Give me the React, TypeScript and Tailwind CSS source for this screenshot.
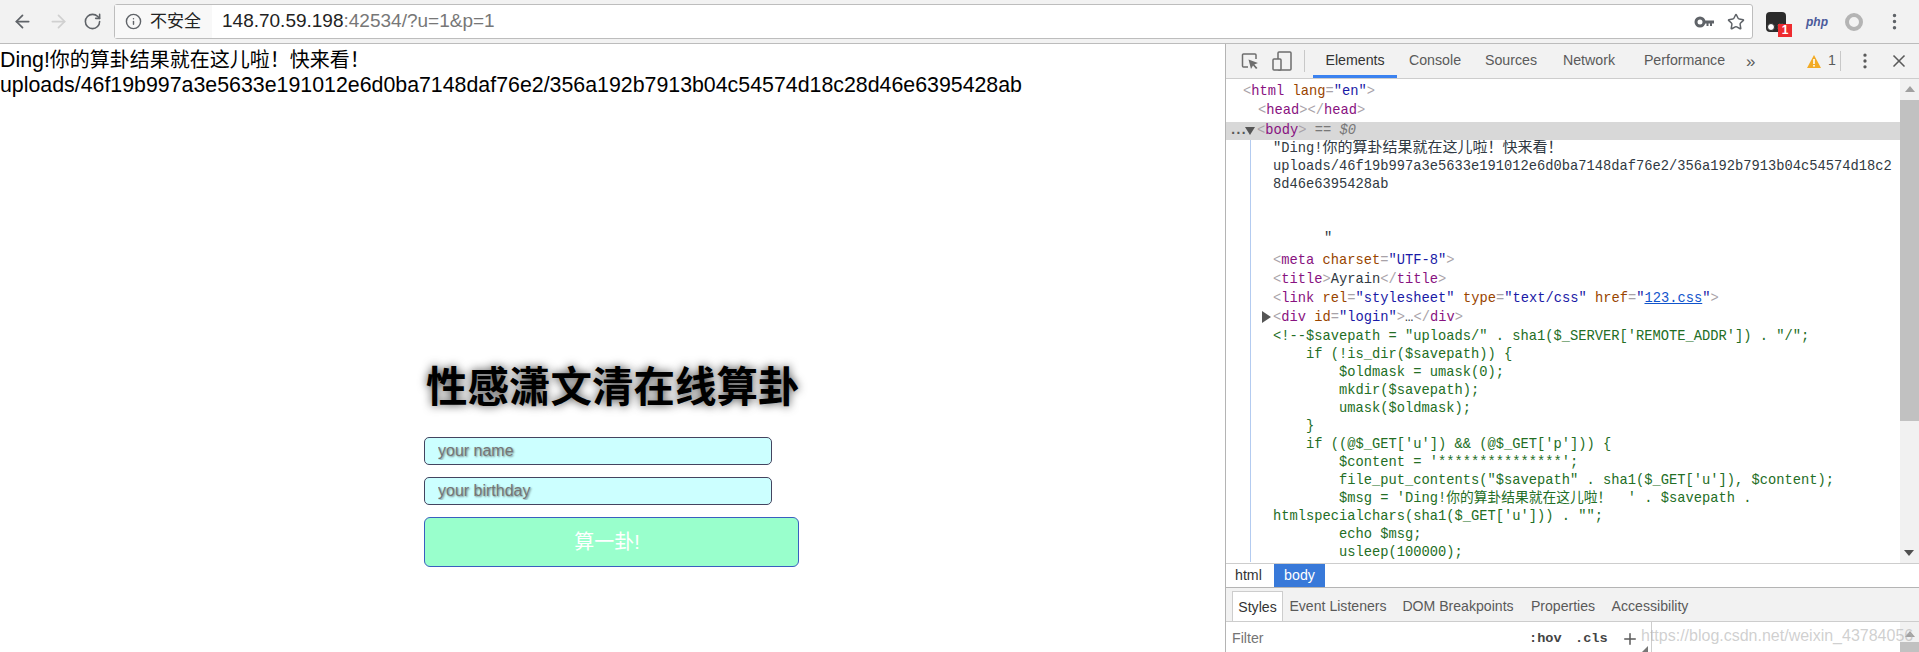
import { ArrowLeft, ArrowRight, Info, MoreVertical, Plus, RotateCw, Star, X } from "lucide-react";

const sans = "font-['Liberation_Sans','Noto_Sans_CJK_SC',sans-serif]";
const mono = "font-['Liberation_Mono','Noto_Sans_CJK_SC',monospace]";

const Tag = ({ children }: { children: React.ReactNode }) => <span className="text-[#881280]">{children}</span>;
const Br = ({ children }: { children: React.ReactNode }) => <span className="text-[#a8a2a8]">{children}</span>;
const Attr = ({ children }: { children: React.ReactNode }) => <span className="text-[#994500]">{children}</span>;
const Val = ({ children }: { children: React.ReactNode }) => <span className="text-[#1a1aa6]">{children}</span>;

const commentLines = [
  `<!--$savepath = "uploads/" . sha1($_SERVER['REMOTE_ADDR']) . "/";`,
  `    if (!is_dir($savepath)) {`,
  `        $oldmask = umask(0);`,
  `        mkdir($savepath);`,
  `        umask($oldmask);`,
  `    }`,
  `    if ((@$_GET['u']) && (@$_GET['p'])) {`,
  `        $content = '***************';`,
  `        file_put_contents("$savepath" . sha1($_GET['u']), $content);`,
  `        $msg = 'Ding!你的算卦结果就在这儿啦！  ' . $savepath .`,
  `htmlspecialchars(sha1($_GET['u'])) . "";`,
  `        echo $msg;`,
  `        usleep(100000);`,
];

function KeyIcon() {
  return (
    <svg width="20" height="12" viewBox="0 0 20 12" className="ml-auto">
      <circle cx="6" cy="6" r="4" fill="none" stroke="#5f6368" strokeWidth="3" />
      <path d="M10 4.5H20V7.5H18V10H16V7.5H14.5V10H12.5V7.5H10Z" fill="#5f6368" />
    </svg>
  );
}

function Toolbar() {
  return (
    <div className="flex h-[44px] items-center border-b border-[#bcbcbc] bg-[#f2f2f2]">
      <ArrowLeft className="ml-[12px] text-[#5f6368]" size={21} />
      <ArrowRight className="ml-[15px] text-[#d0d0d0]" size={21} />
      <RotateCw className="ml-[14px] text-[#5f6368]" size={19} />
      <div className="ml-[12px] flex h-[35px] w-[1639px] items-center rounded-[3px] border border-[#bdbdbd] bg-white">
        <div className="flex h-[33px] w-[97px] items-center bg-[#f8f8f8]">
          <Info className="ml-[10px] text-[#5f6368]" size={17} />
          <span className="ml-[8px] text-[17px] text-[#222]">不安全</span>
        </div>
        <div className="ml-[10px] text-[19px] text-[#777]">
          <span className="text-[#222]">148.70.59.198</span>:42534/?u=1&amp;p=1
        </div>
        <KeyIcon />
        <Star className="ml-[13px] mr-[7px] text-[#5f6368]" size={18} />
      </div>
      <div className="relative ml-[13px] h-[20px] w-[20px] rounded-[4px] bg-[#2b2b2b]">
        <span className="absolute bottom-[1px] left-[1px] h-[8px] w-[8px] rounded-full border border-[#2b2b2b] bg-white" />
        <span className="absolute bottom-[1px] right-[1px] h-[8px] w-[8px] rounded-full border border-[#2b2b2b] bg-white" />
        <span className="absolute left-[12px] top-[12px] h-[13px] w-[14px] bg-[#ee2b2f] text-center text-[12px] font-bold leading-[13px] text-white">1</span>
      </div>
      <span className="ml-[20px] w-[22px] text-[12px] font-bold italic text-[#4a5a9a]">php</span>
      <span className="ml-[17px] h-[18px] w-[18px] rounded-full border-[4px] border-[#b4b4b4]" />
      <MoreVertical className="ml-[21px] text-[#5f6368]" size={21} />
    </div>
  );
}

function InspectIcon() {
  return (
    <svg width="18" height="18" viewBox="0 0 18 18" fill="none" className="ml-[15px]">
      <path d="M7 15H2.5A1 1 0 0 1 1.5 14V3A1 1 0 0 1 2.5 2H14A1 1 0 0 1 15 3V7" stroke="#6e6e6e" strokeWidth="1.5" />
      <path d="M7.5 7.5L17 11L13.3 12.6L16.5 16L15 17L12 13.6L10 17Z" fill="#6e6e6e" />
    </svg>
  );
}

function DeviceIcon() {
  return (
    <svg width="20" height="20" viewBox="0 0 20 20" fill="none" className="ml-[13px]">
      <rect x="6" y="1" width="13" height="18" rx="1" stroke="#6e6e6e" strokeWidth="1.5" />
      <rect x="1" y="8" width="8" height="11" rx="1" fill="#f2f2f2" stroke="#6e6e6e" strokeWidth="1.5" />
    </svg>
  );
}

function DevTabs() {
  return (
    <div className="flex h-[35px] items-center border-b border-[#cdcdcd] bg-[#f2f2f2] text-[14.2px] text-[#5a5a5a]">
      <InspectIcon />
      <DeviceIcon />
      <span className="ml-[12px] h-[22px] w-px bg-[#c8c8c8]" />
      <div className="ml-[8px] flex h-full">
        <div className="flex w-[84px] items-center justify-center border-b-[3px] border-[#3b82f0] pt-[2px] text-[#333]">Elements</div>
        <div className="flex w-[76px] items-center justify-center">Console</div>
        <div className="flex w-[76px] items-center justify-center">Sources</div>
        <div className="flex w-[80px] items-center justify-center">Network</div>
        <div className="flex w-[111px] items-center justify-center">Performance</div>
      </div>
      <span className="ml-[6px] w-[18px] text-[17px] leading-none">»</span>
      <svg width="14" height="13" viewBox="0 0 14 13" className="ml-[43px]">
        <path d="M7 0L14 13H0Z" fill="#f2ab26" />
        <rect x="6.2" y="4" width="1.6" height="5" fill="#fff" />
        <rect x="6.2" y="10" width="1.6" height="1.6" fill="#fff" />
      </svg>
      <span className="ml-[7px]">1</span>
      <span className="ml-[4px] h-[20px] w-px bg-[#c8c8c8]" />
      <MoreVertical className="ml-[14px]" size={20} />
      <X className="ml-[14px]" size={20} />
    </div>
  );
}

function ElementsPane() {
  return (
    <div className={`flex h-[485px] border-b border-[#cdcdcd] ${mono} text-[13.75px] text-[#303942]`}>
      <div className="min-w-0 flex-1">
        <div className="h-[43px] pt-[3px] leading-[19px]">
          <div className="pl-[17px]">
            <Br>&lt;</Br>
            <Tag>html</Tag> <Attr>lang</Attr>
            <Br>=</Br>
            <Val>"en"</Val>
            <Br>&gt;</Br>
          </div>
          <div className="pl-[32px]">
            <Br>&lt;</Br>
            <Tag>head</Tag>
            <Br>&gt;&lt;/</Br>
            <Tag>head</Tag>
            <Br>&gt;</Br>
          </div>
        </div>
        <div className="relative h-[18px] bg-[#d8d8d8] pl-[31px] leading-[18px]">
          <span className="absolute left-[3px] top-0 font-bold tracking-[-3px] text-[#555]">...</span>
          <span className="absolute left-[19px] top-[5px] h-0 w-0 border-x-[5px] border-t-[8px] border-x-transparent border-t-[#555]" />
          <Br>&lt;</Br>
          <Tag>body</Tag>
          <Br>&gt;</Br> <span className="text-[#777]">==</span> <span className="italic text-[#777]">$0</span>
        </div>
        <div className="ml-[24px] border-l border-[#b3cbf0] pl-[22px]">
          <div className="h-[111px] leading-[18px]">
            <div>
              "Ding!<span className="text-[15px]">你的算卦结果就在这儿啦！快来看！</span>
            </div>
            <div>uploads/46f19b997a3e5633e191012e6d0ba7148daf76e2/356a192b7913b04c54574d18c2</div>
            <div>8d46e6395428ab</div>
            <div className="mt-[36px] pl-[51px]">"</div>
          </div>
          <div className="leading-[19px]">
            <div>
              <Br>&lt;</Br>
              <Tag>meta</Tag> <Attr>charset</Attr>
              <Br>=</Br>
              <Val>"UTF-8"</Val>
              <Br>&gt;</Br>
            </div>
            <div>
              <Br>&lt;</Br>
              <Tag>title</Tag>
              <Br>&gt;</Br>Ayrain
              <Br>&lt;/</Br>
              <Tag>title</Tag>
              <Br>&gt;</Br>
            </div>
            <div>
              <Br>&lt;</Br>
              <Tag>link</Tag> <Attr>rel</Attr>
              <Br>=</Br>
              <Val>"stylesheet"</Val> <Attr>type</Attr>
              <Br>=</Br>
              <Val>"text/css"</Val> <Attr>href</Attr>
              <Br>=</Br>
              <Val>"</Val>
              <span className="text-[#1155cc] underline">123.css</span>
              <Val>"</Val>
              <Br>&gt;</Br>
            </div>
            <div className="relative">
              <span className="absolute left-[-11px] top-[3px] h-0 w-0 border-y-[6px] border-l-[9px] border-y-transparent border-l-[#555]" />
              <Br>&lt;</Br>
              <Tag>div</Tag> <Attr>id</Attr>
              <Br>=</Br>
              <Val>"login"</Val>
              <Br>&gt;</Br>…<Br>&lt;/</Br>
              <Tag>div</Tag>
              <Br>&gt;</Br>
            </div>
          </div>
          <div className="mt-[1px] whitespace-pre leading-[18px] text-[#236e25]">
            {commentLines.map((line) => (
              <div key={line}>{line}</div>
            ))}
          </div>
        </div>
      </div>
      <div className="relative w-[19px] bg-[#f1f1f1]">
        <span className="absolute left-[5px] top-[7px] h-0 w-0 border-x-[5px] border-b-[6px] border-x-transparent border-b-[#a0a0a0]" />
        <div className="mt-[21px] h-[321px] bg-[#c1c1c1]" />
        <span className="absolute bottom-[7px] left-[4px] h-0 w-0 border-x-[5px] border-t-[6px] border-x-transparent border-t-[#505050]" />
      </div>
    </div>
  );
}

function StylesPane() {
  return (
    <>
      <div className="flex h-[24px] border-b border-[#b4b4b4] text-[14.2px] leading-[23px] text-[#333]">
        <span className="w-[48px] pl-[9px]">html</span>
        <span className="w-[51px] bg-[#3879d9] text-center text-white">body</span>
      </div>
      <div className="flex h-[34px] items-end border-b border-[#cdcdcd] bg-[#f2f2f2] pl-[6px] text-[14.1px] text-[#5a5a5a]">
        <div className="h-[30px] w-[51px] border-x border-t border-[#cdcdcd] bg-white text-center leading-[30px] text-[#333]">Styles</div>
        <div className="h-[30px] w-[110px] text-center leading-[30px]">Event Listeners</div>
        <div className="h-[30px] w-[130px] text-center leading-[30px]">DOM Breakpoints</div>
        <div className="h-[30px] w-[80px] text-center leading-[30px]">Properties</div>
        <div className="h-[30px] w-[94px] text-center leading-[30px]">Accessibility</div>
      </div>
      <div className="relative flex min-h-0 flex-1">
        <div className="relative flex w-[426px] items-center border-r border-[#cdcdcd] pl-[6px] pt-[4px] text-[14.2px] text-[#757575]">
          Filter
          <span className={`absolute left-[303px] ${mono} text-[13.6px] font-bold text-[#444]`}>:hov</span>
          <span className={`absolute left-[349px] ${mono} text-[13.6px] font-bold text-[#444]`}>.cls</span>
          <Plus className="absolute left-[395px] text-[#5a5a5a]" size={18} />
          <span className="absolute bottom-0 right-[3px] h-0 w-0 border-b-[6px] border-l-[6px] border-b-[#777] border-l-transparent" />
        </div>
        <div className="flex-1" />
        <div className="relative w-[19px] bg-[#f1f1f1]">
          <span className="absolute left-[5px] top-[9px] h-0 w-0 border-x-[5px] border-b-[6px] border-x-transparent border-b-[#a0a0a0]" />
          <div className="mt-[20px] h-[10px] bg-[#c1c1c1]" />
        </div>
        <span className="absolute left-[415px] top-[2px] whitespace-nowrap text-[16px] text-[#b0b0b0]/60">https://blog.csdn.net/weixin_43784056</span>
      </div>
    </>
  );
}

export default function App() {
  return (
    <div className={`flex h-screen w-full flex-col overflow-hidden bg-white ${sans}`}>
      <Toolbar />
      <div className="flex min-h-0 flex-1">
        <div className="w-[1225px] shrink-0">
          <div className="pt-[4px] text-[21.35px] leading-[24.5px] text-black">
            <div>
              Ding!<span className="text-[20px]">你的算卦结果就在这儿啦！快来看！</span>
            </div>
            <div>uploads/46f19b997a3e5633e191012e6d0ba7148daf76e2/356a192b7913b04c54574d18c28d46e6395428ab</div>
          </div>
          <div className="ml-[424px] mt-[265px] flex flex-col">
            <h1 className="mb-[25px] ml-[2px] h-[50px] pt-px text-[41.5px] font-bold leading-[50px] text-black [text-shadow:0_0_10px_rgba(0,0,0,0.75)]">性感潇文清在线算卦</h1>
            <input
              className="h-[28px] w-[348px] rounded-[5px] border border-[#444460] bg-[#ccffff] pl-[13px] text-[16px] placeholder:text-[#757575] placeholder:[text-shadow:1px_1px_2px_rgba(0,0,0,0.45)]"
              placeholder="your name"
            />
            <input
              className="mt-[12px] h-[28px] w-[348px] rounded-[5px] border border-[#444460] bg-[#ccffff] pl-[13px] text-[16px] placeholder:text-[#757575] placeholder:[text-shadow:1px_1px_2px_rgba(0,0,0,0.45)]"
              placeholder="your birthday"
            />
            <button className="mt-[12px] h-[50px] w-[375px] rounded-[6px] border border-[#3a5fc0] bg-[#99ffcc] pr-[9px] text-[20px] text-white">算一卦!</button>
          </div>
        </div>
        <div className="flex min-w-0 flex-1 flex-col border-l border-[#b4b4b4]">
          <DevTabs />
          <ElementsPane />
          <StylesPane />
        </div>
      </div>
    </div>
  );
}
